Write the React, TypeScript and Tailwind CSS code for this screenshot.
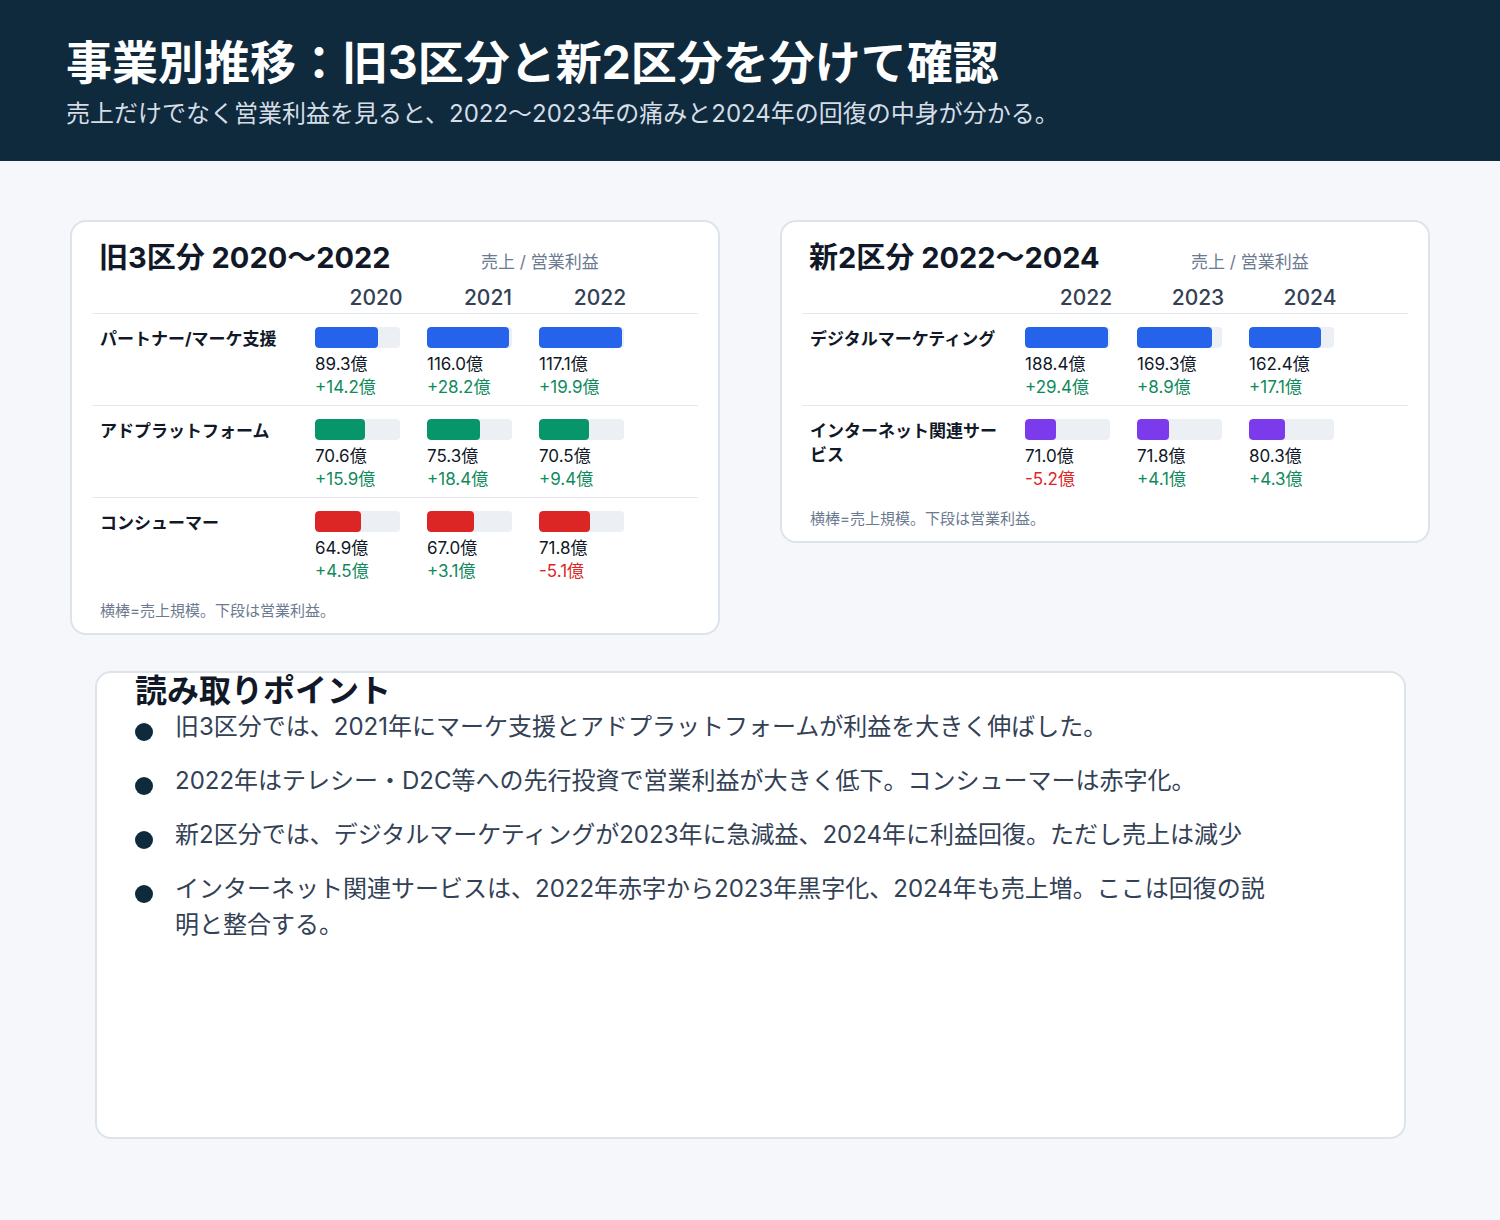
import React from "react";

type Cell = { v: number; p: number };
type Row = { name: string; color: string; cells: Cell[] };

const fmt = (n: number) => n.toFixed(1) + "億";
const fmtP = (n: number) => (n >= 0 ? "+" : "") + n.toFixed(1) + "億";

function Card({ title, years, rows, max }: { title: string; years: string[]; rows: Row[]; max: number }) {
  return (
    <div className="w-[650px] rounded-[16px] border-2 border-[#dde3ea] bg-white px-[20px] pt-[16px] pb-[10px]">
      <div className="flex items-baseline px-[7px]">
        <div className="w-[382px] text-[29px] font-bold text-[#111827] leading-[40px]">{title}</div>
        <div className="text-[17px] text-[#6b7a90]">売上 / 営業利益</div>
      </div>
      <div className="flex border-b border-[#e5e9ef] h-[36px] items-end pb-[0px]">
        <div className="w-[223px]" />
        {years.map((y) => (
          <div key={y} className="w-[112px] text-center text-[21px] font-medium text-[#334155] pl-[10px]">{y}</div>
        ))}
      </div>
      {rows.map((r, i) => (
        <div key={r.name} className={"flex h-[92px] pt-[13px] " + (i < rows.length - 1 ? "border-b border-[#e5e9ef]" : "")}>
          <div className="w-[223px] pl-[8px] pr-[18px] text-[17px] font-bold text-[#111827] leading-[24px]">{r.name}</div>
          {r.cells.map((c, j) => (
            <div key={j} className="w-[112px]">
              <div className="w-[85px] h-[21px] rounded-[4px] bg-[#eceff4] overflow-hidden">
                <div className="h-full rounded-[4px]" style={{ width: `${(c.v / max) * 100}%`, background: r.color }} />
              </div>
              <div className="mt-[5px] text-[17px] leading-[23px] text-[#111827]">{fmt(c.v)}</div>
              <div className={"text-[17px] leading-[23px] " + (c.p >= 0 ? "text-[#0f8a5c]" : "text-[#dc2626]")}>{fmtP(c.p)}</div>
            </div>
          ))}
        </div>
      ))}
      <div className="px-[8px] pt-[10px] text-[15px] text-[#6b7a90]">横棒=売上規模。下段は営業利益。</div>
    </div>
  );
}

export default function App() {
  const blue = "#2563eb", green = "#079669", red = "#dc2626", purple = "#7c3aed";
  const left: Row[] = [
    { name: "パートナー/マーケ支援", color: blue, cells: [{ v: 89.3, p: 14.2 }, { v: 116.0, p: 28.2 }, { v: 117.1, p: 19.9 }] },
    { name: "アドプラットフォーム", color: green, cells: [{ v: 70.6, p: 15.9 }, { v: 75.3, p: 18.4 }, { v: 70.5, p: 9.4 }] },
    { name: "コンシューマー", color: red, cells: [{ v: 64.9, p: 4.5 }, { v: 67.0, p: 3.1 }, { v: 71.8, p: -5.1 }] },
  ];
  const right: Row[] = [
    { name: "デジタルマーケティング", color: blue, cells: [{ v: 188.4, p: 29.4 }, { v: 169.3, p: 8.9 }, { v: 162.4, p: 17.1 }] },
    { name: "インターネット関連サービス", color: purple, cells: [{ v: 71.0, p: -5.2 }, { v: 71.8, p: 4.1 }, { v: 80.3, p: 4.3 }] },
  ];
  const points = [
    "旧3区分では、2021年にマーケ支援とアドプラットフォームが利益を大きく伸ばした。",
    "2022年はテレシー・D2C等への先行投資で営業利益が大きく低下。コンシューマーは赤字化。",
    "新2区分では、デジタルマーケティングが2023年に急減益、2024年に利益回復。ただし売上は減少",
    "インターネット関連サービスは、2022年赤字から2023年黒字化、2024年も売上増。ここは回復の説明と整合する。",
  ];
  return (
    <div className="w-[1500px] h-[1220px] bg-[#f5f7fa]" style={{ fontFamily: 'Inter, "Noto Sans CJK JP", "Noto Sans", sans-serif' }}>
      <div className="h-[161px] bg-[#0f2a3d] px-[66px] pt-[30px]">
        <div className="text-[46px] font-bold text-white leading-[64px]">事業別推移：旧3区分と新2区分を分けて確認</div>
        <div className="text-[24px] text-[#d5dde6] leading-[40px]">売上だけでなく営業利益を見ると、2022〜2023年の痛みと2024年の回復の中身が分かる。</div>
      </div>
      <div className="flex gap-[60px] pl-[70px] pt-[59px] items-start">
        <Card title="旧3区分 2020〜2022" years={["2020", "2021", "2022"]} rows={left} max={120} />
        <Card title="新2区分 2022〜2024" years={["2022", "2023", "2024"]} rows={right} max={192} />
      </div>
      <div className="ml-[95px] mt-[36px] w-[1311px] h-[468px] rounded-[16px] border-2 border-[#dde3ea] bg-white px-[38px]">
        <div className="text-[32px] font-bold text-[#111827] leading-[36px]">読み取りポイント</div>
        <div className="flex flex-col gap-[18px] pr-[100px]">
          {points.map((p) => (
            <div key={p} className="flex">
              <div className="w-[18px] h-[18px] rounded-full bg-[#0f2a3d] mt-[14px] mr-[22px] shrink-0" />
              <div className="text-[24px] text-[#334155] leading-[36px]">{p}</div>
            </div>
          ))}
        </div>
      </div>
    </div>
  );
}
